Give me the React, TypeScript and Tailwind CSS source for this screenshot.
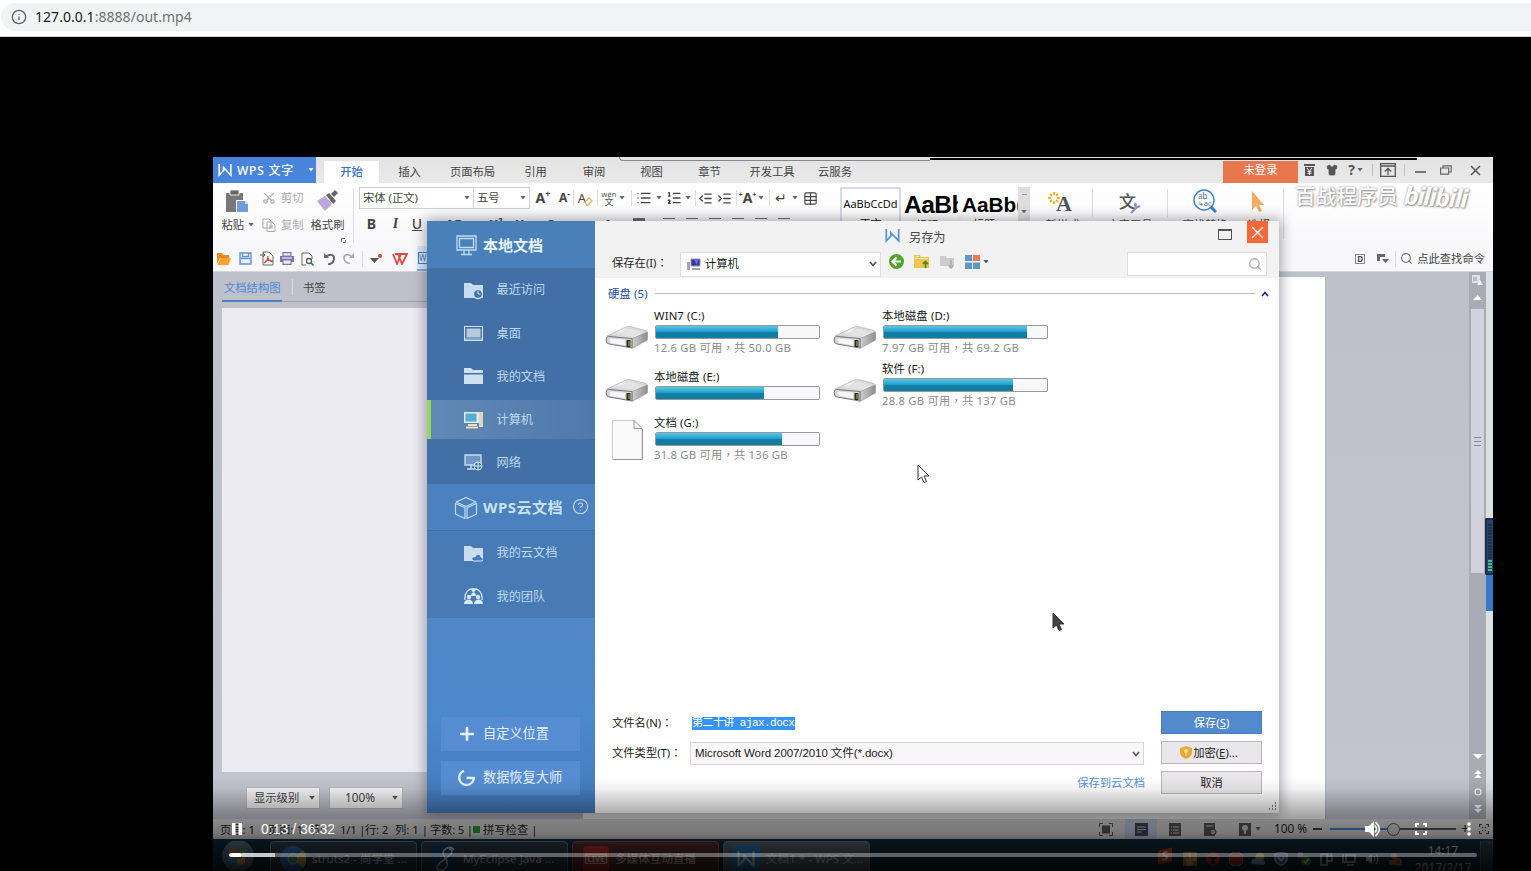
import React from "react";
import {
  Info, Scissors, List, ListOrdered,
  IndentDecrease, IndentIncrease, Table, Search, Shirt, CircleHelp, Plus,
} from "lucide-react";

const ui = "font-['Noto_Sans','Noto_Sans_CJK_SC',sans-serif]";

function Cell({ c, children }: { c: string; children?: React.ReactNode }) {
  return <div className={`flex shrink-0 items-center justify-center whitespace-nowrap ${c}`}>{children}</div>;
}

function Caret({ c = "text-[#666]" }: { c?: string }) {
  return (
    <svg width="6" height="3.5" viewBox="0 0 6 4" className={`shrink-0 ${c}`}>
      <path d="M0 0h6L3 4z" fill="currentColor" />
    </svg>
  );
}

function Chevron({ c = "text-[#555]" }: { c?: string }) {
  return (
    <svg width="8" height="6" viewBox="0 0 8 6" className={`shrink-0 ${c}`}>
      <path d="M1 1l3 3.5L7 1" fill="none" stroke="currentColor" strokeWidth="1.7" />
    </svg>
  );
}

function Punct({ children }: { children: string }) {
  return <span className="font-['Noto_Sans_CJK_TC']" lang="zh-Hant">{children}</span>;
}

function WMark({ w = 14, color = "white" }: { w?: number; color?: string }) {
  return (
    <svg width={w} height={w} viewBox="0 0 14 14" className="shrink-0">
      <path d="M1.2 1v11L5.5 7.500V4.500L12.800 12V1M1.200 12L5.500 7.500" fill="none" stroke={color} strokeWidth="1.600" />
    </svg>
  );
}

function AddressBar() {
  return (
    <div className="flex h-[37px] items-start border-b border-[#d5d7da] bg-white pt-[3px]">
      <div className="ml-px flex h-7 flex-1 items-center rounded-l-full bg-[#f1f3f4] pl-[10px]">
        <Info size={16} strokeWidth={2} className="text-[#5f6368]" />
        <span className="ml-2 font-['Noto_Sans'] text-[14px] leading-none tracking-[0.040px] text-[#202124]">
          127.0.0.1<span className="text-[#6f7377]">:8888/out.mp4</span>
        </span>
      </div>
    </div>
  );
}

function TitleTabs() {
  return (
    <div className="flex h-[26px] bg-gradient-to-b from-[#e4e3e3] to-[#e9e9ea] text-[11.3px] leading-none text-[#444]">
      <div className="flex w-[103px] items-center bg-[#4785dc] pl-[5px] text-white">
        <WMark />
        <span className="ml-[5px] w-[71px] pt-px text-[12px] font-medium tracking-[0.800px]">WPS 文字</span>
        <Caret c="text-white" />
      </div>
      <div className="ml-2 flex w-[55px] items-end">
        <div className="flex h-[22px] w-full items-center justify-center bg-white font-medium text-[#3475c8]">开始</div>
      </div>
      <div className="flex pt-[4px]">
        <Cell c="w-[61px]">插入</Cell>
        <Cell c="w-[65px]">页面布局</Cell>
        <Cell c="w-[61px]">引用</Cell>
        <Cell c="w-[56px]">审阅</Cell>
        <Cell c="w-[59px]">视图</Cell>
        <Cell c="w-[57px]">章节</Cell>
        <Cell c="w-[68px]">开发工具</Cell>
        <Cell c="w-[58px]">云服务</Cell>
      </div>
      <div className="flex flex-1 items-end justify-end text-[#555]">
        <div className="flex h-[22px] w-[75px] items-center justify-center bg-[#e9774e] pb-1 text-white">未登录</div>
        <div className="flex h-[26px] w-[195px] items-center">
          <Cell c="w-[23px]">
            <svg width="11" height="12" viewBox="0 0 11 12"><path d="M0 0h11v2H0zM1 3h9v9H1z" fill="#555" /><path d="M3 4l2.5 3L8 4M5.5 7v4M3.5 7.5h4M3.5 9.3h4" stroke="#eee" fill="none" /></svg>
          </Cell>
          <Cell c="w-[21px]"><Shirt size={12} fill="#555" strokeWidth={1.5} /></Cell>
          <Cell c="w-[27px] gap-[2px] text-[14px] font-bold">?<Caret /></Cell>
          <div className="mx-[3px] h-3 w-px bg-[#bbb]" />
          <Cell c="w-[24px]">
            <svg width="16" height="14" viewBox="0 0 16 14"><path d="M.7.7h14.6v12.6H.7zM1 3h14M8 12V5.5M4.8 8.5L8 5.3l3.2 3.2" fill="none" stroke="#555" strokeWidth="1.3" /></svg>
          </Cell>
          <div className="mx-[4px] h-3 w-px bg-[#c5c5c5]" />
          <Cell c="w-[23px]"><span className="mt-[4px] h-[2px] w-[11px] bg-[#777]" /></Cell>
          <Cell c="w-[28px]">
            <svg width="12" height="10" viewBox="0 0 12 10"><path d="M.6 3h8v6.2h-8zM3 3V.8h8.2V7H8.6" fill="none" stroke="#666" strokeWidth="1.2" /></svg>
          </Cell>
          <Cell c="w-[30px]">
            <svg width="11" height="11" viewBox="0 0 11 11"><path d="M1 1l9 9M10 1l-9 9" stroke="#555" strokeWidth="1.5" /></svg>
          </Cell>
        </div>
      </div>
    </div>
  );
}

function Sep({ c = "" }: { c?: string }) {
  return <div className={`h-4 w-px shrink-0 bg-[#dcdce0] ${c}`} />;
}

function Ribbon() {
  return (
    <div className="flex h-[63px] bg-gradient-to-b from-white to-[#f8f8fa] text-[11.3px] leading-none text-[#444]">
      <div className="flex w-[48px] flex-col items-center pt-[7px]">
        <svg width="24" height="24" viewBox="0 0 24 24">
          <path d="M1 3h17v7h-7v12H1z" fill="#77777b" /><path d="M5 0h9v5H5z" fill="#666" stroke="#fff" strokeWidth=".8" />
          <path d="M12 11h8l3 3v8H12z" fill="#719de0" /><path d="M20 11v3h3z" fill="#c9dcf7" />
        </svg>
        <div className="mt-[5px] flex w-full items-center justify-end gap-[4px] pr-[7px]">粘贴<Caret /></div>
      </div>
      <div className="flex w-[45px] flex-col text-[#aaa]">
        <div className="flex h-[30px] items-center gap-[5px] pl-px"><Scissors size={14} strokeWidth={2} className="-rotate-90" />剪切</div>
        <div className="flex h-6 items-center gap-[5px] pl-px">
          <svg width="14" height="14" viewBox="0 0 14 14"><path d="M1 1h6l2 2v7H1zM5 4h5l3 3v6.500H5z" fill="#fff" stroke="#aaa" /><path d="M7 8h4M7 10h4" stroke="#aaa" /></svg>
          复制
        </div>
      </div>
      <div className="flex w-[43px] flex-col items-center pt-[6px]">
        <svg width="24" height="23" viewBox="0 0 24 23">
          <path d="M1 12l8-5 7 8-7 7z" fill="#bba6de" /><path d="M10 6l3-2 7 8-3 3z" fill="#666" /><path d="M15 5l4-4 3 3-4 4z" fill="#666" />
        </svg>
        <span className="mt-[7px]">格式刷</span>
        <svg width="5" height="5" viewBox="0 0 5 5" className="ml-[31px] mt-[8px]"><path d="M.5 4V.5H4M2 4.5h2.5V2" fill="none" stroke="#666" /></svg>
      </div>
      <Sep c="ml-[4px] mt-[5px] h-[55px]" />
      <div className="flex w-[480px] flex-col pl-[5px] pt-1">
        <div className="flex h-[22px] items-center">
          <div className="flex h-[22px] w-[115px] items-center justify-between border border-[#cfcfd3] bg-white px-[3px]"><span>宋体 (正文)</span><Caret /></div>
          <div className="-ml-px flex h-[22px] w-[57px] items-center justify-between border border-[#cfcfd3] bg-white px-[3px]"><span>五号</span><Caret /></div>
          <Cell c="w-[26px] text-[14px] font-bold">A<span className="-mt-[9px] text-[9px]">+</span></Cell>
          <Cell c="w-[17px] text-[12px] font-bold">A<span className="-mt-[9px] text-[9px]">-</span></Cell>
          <Sep />
          <Cell c="w-[23px] text-[13px]">A<svg width="9" height="9" viewBox="0 0 9 9" className="-ml-[2px] mt-[6px]"><path d="M1 5l4-4 3 3-4 4H3z" fill="#fff" stroke="#e5ae64" strokeWidth="1.300" /></svg></Cell>
          <Sep />
          <Cell c="w-[21px]">
            <svg width="16" height="18" viewBox="0 0 16 18" overflow="visible"><text x="8" y="7.500" textAnchor="middle" fontSize="7.500" fill="#555">wén</text><text x="8" y="16" textAnchor="middle" fontSize="9" fill="#555">文</text></svg>
          </Cell>
          <Caret /><Sep c="ml-[6px]" />
          <Cell c="w-[24px]"><List size={16} strokeWidth={2} /></Cell><Caret />
          <Cell c="w-[23px]"><ListOrdered size={16} strokeWidth={2} /></Cell><Caret />
          <Sep c="ml-[4px]" />
          <Cell c="w-[19px]"><IndentDecrease size={15} strokeWidth={2.200} /></Cell>
          <Cell c="w-[19px]"><IndentIncrease size={15} strokeWidth={2.200} /></Cell>
          <Sep c="ml-[2px]" />
          <Cell c="w-[21px] text-[14px] font-bold"><span className="-mt-2 text-[7px]">+</span>A<span className="-mt-2 text-[7px]">+</span></Cell><Caret />
          <Sep c="ml-[5px]" />
          <Cell c="w-[22px] text-[14px]">↵</Cell><Caret />
          <Cell c="w-[25px]"><Table size={15} strokeWidth={1.800} /></Cell>
        </div>
        <div className="flex h-[30px] items-center text-[13px] font-bold">
          <Cell c="w-[25px] text-[14px]">B</Cell>
          <Cell c="w-[23px] font-serif text-[14px] italic">I</Cell>
          <Cell c="w-[20px] text-[14px] font-medium underline">U</Cell>
          <Cell c="w-[54px] line-through">AB</Cell>
          <Cell c="w-[30px]">X²</Cell>
          <Cell c="w-[22px]">X₂</Cell>
          <Cell c="w-[36px] font-normal">O</Cell>
          <Cell c="w-[26px] text-[11px]">abc</Cell>
          <Cell c="w-[26px]">A</Cell>
          <Cell c="w-[36px]"><span className="h-3 w-3 bg-[#666]" /></Cell>
          {[0, 1, 2, 3, 4, 5].map((i) => (
            <Cell key={i} c="w-[23px]"><span className="h-3 w-3 border-t border-[#666]" /></Cell>
          ))}
        </div>
      </div>
      <div className="ml-[6px] flex w-[193px] pt-1">
        <div className="flex h-[44px] w-[61px] flex-col items-center overflow-hidden border-2 border-[#d3dcea] bg-white pt-[9px] font-['Open_Sans','Noto_Sans_CJK_SC'] text-[11px] text-black">
          <span className="tracking-[0.050px]">AaBbCcDd</span><span className="mt-[9px]">正文</span>
        </div>
        <div className="flex h-[44px] w-[57px] flex-col overflow-hidden bg-white pl-[3px] pt-[6px] font-['Liberation_Sans','Noto_Sans_CJK_SC'] text-black">
          <span className="text-[24.500px] font-bold tracking-[-0.500px]">AaBb</span><span className="ml-[12px] mt-[3px] text-[11px]">标题 1</span>
        </div>
        <div className="ml-[3px] flex h-[44px] w-[57px] flex-col overflow-hidden bg-white pl-px pt-[6px] font-['Liberation_Sans','Noto_Sans_CJK_SC'] text-black">
          <span className="text-[20.800px] font-bold leading-[24px]">AaBb(</span><span className="ml-[11px] mt-[3px] text-[11px]">标题 2</span>
        </div>
        <div className="flex h-[44px] w-[12px] flex-col items-center justify-between bg-[#dedee0] py-[7px] pb-[18px]"><span className="h-px w-[5px] bg-[#999]" /><Caret /></div>
      </div>
      <div className="flex pt-[6px]">
        <div className="flex w-[59px] flex-col items-center pt-px">
          <div className="flex h-[24px] items-center pr-[5px]">
            <svg width="12" height="14" viewBox="0 0 12 14" className="-mt-[6px]"><path d="M6 0v3M6 9v3M0 6h3M9 6h3M2 2l2 2M8 8l2 2M10 2L8 4M4 8l-2 2" stroke="#f1af22" strokeWidth="1.8" /></svg>
            <span className="-ml-[4px] mt-1 font-['Liberation_Serif'] text-[22px] font-bold text-[#555]">A</span>
          </div>
          <span className="mt-[5px]">新样式</span>
        </div>
        <Sep c="h-[28px]" />
        <div className="flex w-[74px] flex-col items-center">
          <div className="flex h-[25px] items-center">
            <span className="text-[17px] font-medium text-[#555]">文</span>
            <svg width="11" height="12" viewBox="0 0 11 12" className="-ml-[6px] mt-[12px]"><path d="M1 11l6-6M6 1c-2 3 0 5 4 3" fill="none" stroke="#9793bd" strokeWidth="2.4" /></svg>
          </div>
          <span className="mt-[5px]">文字工具</span>
        </div>
        <Sep c="h-[28px]" />
        <div className="flex w-[74px] flex-col items-center">
          <svg width="24" height="25" viewBox="0 0 24 25">
            <circle cx="11" cy="11" r="10" fill="#fff" stroke="#3b81cb" strokeWidth="1.4" /><path d="M18 18l5 5" stroke="#3478cf" strokeWidth="3" />
            <text x="5" y="10" fontSize="8" fill="#4d6d91">ab</text><text x="5" y="17" fontSize="7" fill="#4d6d91">↳ac</text>
          </svg>
          <span className="mt-[5px]">查找替换</span>
        </div>
        <div className="flex w-[34px] flex-col items-center">
          <svg width="14" height="24" viewBox="0 0 14 24" className="mr-[2px]"><path d="M1 2v19l4-4 3 6 3-1-3-6h5z" fill="#f2ab67" /></svg>
          <span className="mt-[6px]">选择</span>
        </div>
        <Sep c="ml-[7px] h-[50px]" />
      </div>
    </div>
  );
}

function QuickBar() {
  return (
    <div className="flex h-[26px] items-center border-b border-[#d5d5da] bg-[#f8f8fa] text-[11.3px] leading-none text-[#444]">
      <Cell c="w-[22px]"><svg width="14" height="12" viewBox="0 0 14 12"><path d="M0 0h5l1.500 2H12v3H3L0 11z" fill="#e48a24" /><path d="M3.500 5H14l-2.500 7H.5z" fill="#ffa12e" /></svg></Cell>
      <Cell c="w-[21px]"><svg width="13" height="13" viewBox="0 0 13 13"><path d="M1 1h11v11H1zM1 6.500h11M3.500 1v3.500h6V1" fill="#eef4fd" stroke="#6393d7" strokeWidth="1.400" /></svg></Cell>
      <Cell c="w-[21px]">
        <svg width="14" height="15" viewBox="0 0 14 15"><path d="M3 1h6l4 4v9H3z" fill="#fff" stroke="#666" /><path d="M0 4h5M3 2l2 2-2 2" stroke="#57783b" fill="none" /><path d="M8 5c0 4-2 6-4 7M8 7c1 3 3 4 5 3M5 11c2-2 5-2 7-1" fill="none" stroke="#db3d3d" strokeWidth="1.2" /></svg>
      </Cell>
      <Cell c="w-[20px]"><svg width="14" height="13" viewBox="0 0 14 13"><path d="M0 4h14v6H0z" fill="#7d76ae" /><path d="M3 .6h8V4H3zM3 8h8v4.400H3z" fill="#eee" stroke="#7d76ae" strokeWidth="1.200" /><path d="M2 6h10" stroke="#fff" /></svg></Cell>
      <Cell c="w-[21px]"><svg width="13" height="14" viewBox="0 0 13 14"><path d="M5 13H1V1h7l3 3v3" fill="#fff" stroke="#666" /><circle cx="8" cy="9" r="2.500" fill="#fff" stroke="#555" strokeWidth="1.300" /><path d="M10 11l2.500 2.500" stroke="#2f7d52" strokeWidth="1.600" /></svg></Cell>
      <Cell c="w-[21px]"><svg width="12" height="13" viewBox="0 0 12 13"><path d="M1 1v5h5" fill="#666" /><path d="M3 5c4-4 8-2 8 1 0 4-3 6-6 6.500" fill="none" stroke="#666" strokeWidth="2" /></svg></Cell>
      <Cell c="w-[20px]"><svg width="12" height="13" viewBox="0 0 12 13"><path d="M11 1v5H6" fill="#aaa" /><path d="M9 5C5 1 1 3 1 6c0 3 3 5 6 5.500" fill="none" stroke="#aaa" strokeWidth="1.600" /></svg></Cell>
      <Sep c="ml-[3px]" />
      <Cell c="w-[26px]"><svg width="12" height="9" viewBox="0 0 12 9"><path d="M0 4h9L4.5 9z" fill="#555" /><circle cx="10" cy="2" r="2" fill="#e83a2d" /></svg></Cell>
      <Cell c="w-[22px]">
        <svg width="16" height="12" viewBox="0 0 16 12"><path d="M1 1l4 10 4-10M6 1l4 10 5-10H3" fill="none" stroke="#dd4b42" strokeWidth="1.8" /></svg>
      </Cell>
      <div className="ml-[6px] flex h-full w-[15px] items-center border-b-2 border-[#79a9e4] bg-[#dce8f8] pl-px">
        <span className="flex h-3 w-[10px] items-center border border-[#3f79c8] text-[8px] text-[#3f79c8]">W</span>
      </div>
      <div className="flex flex-1 items-center justify-end pr-[8px]">
        <Cell c="w-[22px]"><span className="border border-[#888] px-px text-[8px] font-bold leading-[8px]">D</span></Cell>
        <Cell c="w-[24px]"><svg width="12" height="10" viewBox="0 0 12 10"><path d="M0 0h8v3H3v4H0zM5 5h7L8.500 9z" fill="#666" /></svg></Cell>
        <Sep c="mr-[4px]" />
        <Search size={13} strokeWidth={2.200} className="mr-1 text-[#777]" />
        <span>点此查找命令</span>
      </div>
    </div>
  );
}

function DocumentArea() {
  return (
    <div className="flex h-[547px] bg-gradient-to-b from-[#bec1ca] to-[#c4c4ce]">
      <div className="flex w-[370px] flex-col pl-[9px] text-[11.3px] leading-none">
        <div className="flex h-[30px] items-center border-b border-[#9fa2ac]">
          <div className="-mb-px flex h-[30px] w-[60px] items-center border-b-2 border-[#4a80c4] pl-[2px] pt-[3px] text-[#4e88d8]">文档结构图</div>
          <Sep c="ml-[10px] bg-[#a4a6b0]" />
          <span className="ml-[10px] mt-[2px] text-[#444]">书签</span>
        </div>
        <div className="mt-[6px] h-[464px] bg-[#ecebf2]" />
        <div className="flex gap-[9px] pl-[24px] pt-[15px] text-[#444]">
          <div className="flex h-[22px] w-[74px] items-center justify-between border border-[#bbb] bg-[#f5f5f8] px-[7px] pr-[4px]">显示级别<Caret c="scale-110 text-[#555]" /></div>
          <div className="flex h-[22px] w-[74px] items-center justify-between border border-[#bbb] bg-[#f5f5f8] pl-[15px] pr-[4px] text-[11.800px]">100%<Caret c="scale-110 text-[#555]" /></div>
        </div>
      </div>
      <div className="mt-[5px] w-[743px] border-r border-[#b4b6c2] bg-white" />
      <div className="flex flex-1 justify-end">
        <div className="flex w-[17px] flex-col items-center bg-[#a9abb5]">
          <svg width="11" height="10" viewBox="0 0 11 10" className="mt-[3px] shrink-0"><path d="M0 0h8v8H0z" fill="#dfe0e6" /><path d="M5 10l3-5 3 5z" fill="#f4f4f4" /><path d="M2 2v4M4 2v4" stroke="#999" /></svg>
          <svg width="9" height="5" viewBox="0 0 9 5" className="mt-[10px] shrink-0"><path d="M0 5h9L4.500 0z" fill="#fff" /></svg>
          <div className="mt-[9px] flex h-[264px] w-[13px] shrink-0 flex-col items-center justify-center gap-[3px] bg-[#d1d2db]">
            <span className="h-px w-[7px] bg-[#888b98]" /><span className="h-px w-[7px] bg-[#888b98]" /><span className="h-px w-[7px] bg-[#888b98]" />
          </div>
          <svg width="10" height="62" viewBox="0 0 10 62" className="mt-[181px] shrink-0">
            <path d="M0 0h10L5 5zM1 20l4-4 4 4zM1 24l4-4 4 4zM1 51h8l-4 4zM1 55h8l-4 4z" fill="#fff" />
            <circle cx="5" cy="38" r="3" fill="none" stroke="#fff" strokeWidth="1.200" />
          </svg>
        </div>
        <div className="flex w-[7px] flex-col bg-[#dedfe1] pt-[246px]">
          <div className="-ml-px flex h-[57px] flex-col items-center gap-px rounded-l-[2px] border-2 border-r-0 border-[#1d2d4e] bg-[#2a4267] pt-[4px]">
            {Array.from({ length: 16 }, (_, i) => (
              <span key={i} className={i < 12 ? "h-[2px] w-1 bg-[#1e304d]" : "h-[2px] w-1 bg-[#48bf91]"} />
            ))}
          </div>
          <div className="h-[36px] bg-[#3578cd]" />
        </div>
      </div>
    </div>
  );
}

function StatusBar() {
  return (
    <div className="flex h-[20px] items-center whitespace-nowrap bg-[#dcdadb] text-[11.3px] leading-none text-[#222]">
      <div className="flex w-[330px] items-center pl-[7px] pt-px">
        <span className="w-[48px]">页号: 1</span><span className="w-[72px]">页面: 1&nbsp; 节:</span>
        <span className="w-[25px] tracking-[-0.200px]">1/1 |</span><span className="w-[30px] tracking-[-0.200px]">行: 2</span><span className="w-[35px]">列: 1 |</span>
        <span className="w-[43px] tracking-[-0.200px]">字数: 5 |</span><span className="mr-[3px] h-[7px] w-[7px] bg-[#2e9b2e]" /><span>拼写检查 |</span>
      </div>
      <div className="flex flex-1 items-center justify-end pr-[3px]">
        <Cell c="w-[30px]"><svg width="14" height="13" viewBox="0 0 14 13"><path d="M3 2.500h8v8H3z" fill="#555" /><path d="M.5 4V.5H4M10 .5h3.500V4M13.500 9v3.500H10M4 12.500H.5V9" fill="none" stroke="#555" /></svg></Cell>
        <Cell c="h-[20px] w-[32px] bg-[#c0cce0] ml-[4px] mr-[8px]"><svg width="13" height="13" viewBox="0 0 13 13"><path d="M0 0h13v13H0z" fill="#3f4654" /><path d="M2 4h9M2 6.500h9M2 9h5" stroke="#bbb" /></svg></Cell>
        <Cell c="w-[20px]"><svg width="12" height="13" viewBox="0 0 12 13"><path d="M0 0h12v13H0z" fill="#555" /><path d="M2 4h1M4 4h6M2 7h1M4 7h6M2 10h1M4 10h6" stroke="#ccc" /></svg></Cell>
        <Cell c="w-[50px]"><svg width="13" height="13" viewBox="0 0 13 13"><path d="M0 0h11v13H0z" fill="#555" /><path d="M2 3h7" stroke="#ccc" /><circle cx="9" cy="9" r="3" fill="#aaa" stroke="#444" /></svg></Cell>
        <Cell c="w-[20px]"><svg width="12" height="13" viewBox="0 0 12 13"><path d="M0 0h12v13H0z" fill="#555" /><circle cx="6" cy="5" r="3" fill="#ccc" /><path d="M5 8h2v3H5z" fill="#ccc" /></svg></Cell>
        <Caret />
        <span className="ml-[13px] w-[38px] text-[11.800px]">100 %</span>
        <span className="ml-px mr-[8px] h-[1.5px] w-[9px] bg-[#444]" />
        <span className="h-[2px] w-[57px] bg-[#4286dc]" />
        <span className="h-[13px] w-[13px] rounded-full border border-[#555] bg-[#d5d5d5]" />
        <span className="h-[1.5px] w-[56px] bg-[#555]" />
        <span className="ml-[5px] w-[10px] text-[14px]">+</span>
        <svg width="10" height="10" viewBox="0 0 10 10" className="ml-[8px] mr-px"><path d="M.5 3V.5H3M7 .5h2.500V3M9.500 7v2.500H7M3 9.500H.5V7M3 3l1 1M7 3L6 4M3 7l1-1M7 7L6 6" fill="none" stroke="#444" strokeWidth="1.200" /></svg>
      </div>
    </div>
  );
}

function TaskButton({ c, label, children }: { c: string; label: string; children: React.ReactNode }) {
  return (
    <div className={`mr-[4px] flex h-[40px] w-[147px] items-center overflow-hidden rounded-sm border border-[#789] pb-[5px] ${c}`}>
      {children}
      <span className="ml-[6px] whitespace-nowrap text-[11.600px] text-[#e6edf3]">{label}</span>
    </div>
  );
}

function Taskbar() {
  return (
    <div className="flex h-[38px] bg-[#123246] pt-[2px] text-[11.3px] leading-none">
      <Cell c="h-[32px] w-[57px] pr-[8px]">
        <svg width="34" height="32" viewBox="0 0 34 32"><circle cx="17" cy="15" r="16" fill="#638093" /><path d="M8 9c3-2 5-2 8 0v6c-3-2-5-2-8 0z" fill="#df704c" /><path d="M17 9c3 1 5 1 8-1v6c-3 2-5 2-8 1z" fill="#70ab56" /><path d="M7 17c3-2 5-2 8 0v6c-3-2-5-2-8 0z" fill="#599bd1" /><path d="M16 17c3 1 5 1 8-1v6c-3 2-5 2-8 1z" fill="#edc54b" /></svg>
      </Cell>
      <TaskButton c="bg-[#36495a] pl-[9px]" label="struts2 - 尚学堂 ...">
        <svg width="26" height="26" viewBox="0 0 26 26" className="shrink-0"><circle cx="13" cy="13" r="13" fill="#3d80df" /><path d="M13 13L23 4a13 13 0 010 18z" fill="#e9be45" /><circle cx="13" cy="13" r="5" fill="#4fa475" stroke="#ddd" /></svg>
      </TaskButton>
      <TaskButton c="bg-[#36495a] pl-[9px]" label="MyEclipse Java ...">
        <svg width="26" height="28" viewBox="0 0 26 28" className="shrink-0"><path d="M0 0h26v28H0z" fill="#154a84" /><path d="M23 5C20 0 13 3 12 8c0 5 6 6 4 13-2 5-10 6-10 1 0-4 8-7 12-11 4-3 4-7 0-7" fill="none" stroke="#fff" strokeWidth="1.500" /></svg>
      </TaskButton>
      <TaskButton c="bg-[#683538] border-[#bd4848] pl-[10px]" label="多媒体互动直播">
        <span className="flex h-[26px] w-[26px] items-center justify-center rounded bg-[#e43e30] text-[8px] font-bold text-white"><span className="border border-white px-px">LIVE</span></span>
      </TaskButton>
      <TaskButton c="bg-[#667783] pl-[8px]" label="文档1 * - WPS 文...">
        <span className="flex h-[28px] w-[28px] shrink-0 items-center justify-center rounded bg-[#3092de]"><WMark w={18} /></span>
      </TaskButton>
      <div className="flex flex-1 justify-end">
        <div className="flex h-[36px] items-center text-white">
          <Cell c="w-[28px] pb-[6px]"><span className="flex h-[14px] w-[14px] -skew-y-12 items-center justify-center bg-[#e04a24] text-[12px] font-bold">S</span></Cell>
          <Cell c="w-[22.7px]"><svg width="14" height="14" viewBox="0 0 14 14"><path d="M0 0h14v14H0z" fill="#df842a" /><path d="M7 1c-3 3 2 3 0 6M3 8h7M4 10h5M3 12h8M10 7h2v2" fill="none" stroke="#fff" strokeWidth="1.200" /></svg></Cell>
          <Cell c="w-[22.7px]"><svg width="14" height="14" viewBox="0 0 14 14"><circle cx="7" cy="7" r="7" fill="#d13225" /><path d="M2 5h10L7 8z" fill="#222" /><circle cx="7" cy="10" r="2.500" fill="#222" /></svg></Cell>
          <Cell c="w-[22.7px]"><svg width="14" height="14" viewBox="0 0 14 14"><path d="M4 0h6l4 4v6l-4 4H4l-4-4V4z" fill="#c8372f" stroke="#ccc" strokeWidth=".8" /></svg></Cell>
          <Cell c="w-[22.7px]"><svg width="15" height="14" viewBox="0 0 15 14"><circle cx="9" cy="5" r="4.500" fill="#eab83c" /><path d="M1 12c-2-4 2-6 4-5 2-3 6-1 6 1 4 0 4 5 1 5z" fill="#8fbbe3" /></svg></Cell>
          <Cell c="w-[22.7px]"><svg width="14" height="14" viewBox="0 0 14 14"><path d="M1 2q6-3 12 0c1 6-2 10-6 11.500C3 12 0 8 1 2z" fill="#4d7ec0" stroke="#ccd6e6" strokeWidth="1.500" /><path d="M4 5l3 4 3-4" fill="none" stroke="#fff" strokeWidth="1.500" /></svg></Cell>
          <Cell c="w-[22.7px]"><svg width="14" height="14" viewBox="0 0 14 14"><path d="M1 0h5v6H1z" fill="#889" /><circle cx="9" cy="9" r="5" fill="#439a38" /><path d="M6.500 9l2 2 3-4" fill="none" stroke="#fff" strokeWidth="1.500" /></svg></Cell>
          <Cell c="w-[22.7px]"><svg width="13" height="14" viewBox="0 0 13 14"><path d="M1 2h6v11H1zM8 1v3M11 1v3M7 4h5v5H7z" fill="none" stroke="#ddd" strokeWidth="1.500" /></svg></Cell>
          <Cell c="w-[22.7px]"><svg width="14" height="13" viewBox="0 0 14 13"><path d="M4 2h9v7H4zM5 12h7M1 1v8h3" fill="none" stroke="#ddd" strokeWidth="1.500" /></svg></Cell>
          <Cell c="w-[22.7px]"><svg width="14" height="12" viewBox="0 0 14 12"><path d="M1 4h2l4-3v10L3 8H1z" fill="#ddd" /><path d="M9 3q2 3 0 6M11.500 1q3 5 0 10" fill="none" stroke="#ddd" /></svg></Cell>
          <Cell c="w-[22.7px]"><svg width="14" height="14" viewBox="0 0 14 14"><circle cx="6" cy="4" r="3" fill="#d98240" /><path d="M1 8h9v5H1z" fill="#cf6530" /><circle cx="10" cy="10" r="3.300" fill="#b8452c" stroke="#e0a080" /></svg></Cell>
        </div>
        <div className="flex w-[74px] flex-col items-center gap-[5px] pt-[4px] text-[11.900px] text-[#eee]"><span>14:17</span><span>2017/2/17</span></div>
        <div className="w-[13px] border-l border-[#567] bg-[#2f4655]" />
      </div>
    </div>
  );
}

const folder = "M0 2h7l2 2h10v13H0z";
const navIcons: Record<string, React.ReactNode> = {
  recent: <><path d={folder} fill="#c7dcef" /><circle cx="14" cy="13" r="4.500" fill="#4372a7" stroke="#c7dcef" strokeWidth="1.300" /><path d="M14 10v3h2.500" fill="none" stroke="#d8e8f5" /></>,
  desktop: <><path d="M.5 2.500h18v14H.5z" fill="none" stroke="#d0e3f2" strokeWidth="1.200" /><path d="M2.500 4.500h14v9h-14z" fill="#b8cadf" /><path d="M1 15h17" stroke="#d0e3f2" /></>,
  docs: <path d="M0 1h7l2 2h10v3H0zM0 7.500h19V17H0z" fill="#cfe0f1" />,
  pc: <><path d="M0 2h16v11H0z" fill="#dfe9ec" /><path d="M1.500 3.500h11v8h-11z" fill="#55aed2" /><path d="M15 2h4v15h-4z" fill="#dfd6bd" /><path d="M4 15h9M2 17.500h12" stroke="#e9d9b9" strokeWidth="2" /></>,
  net: <><path d="M1 2h16v10H1z" fill="#6f99c3" stroke="#c8dced" strokeWidth="1.400" /><path d="M3 16h8M7 12v4" stroke="#c8dced" strokeWidth="1.500" /><circle cx="14" cy="13" r="4" fill="#4777ad" stroke="#d9e8f4" /><path d="M10 13h8M14 9v8" stroke="#d9e8f4" /></>,
  cloud: <><path d={folder} fill="#cadded" /><path d="M9 17c-3-3 0-5 2-4 1-4 6-3 6 0 3 1 2 4 1 4z" fill="#4b7eb8" stroke="#d7e6f4" /></>,
  team: <><path d="M1 13C0 4 6 2 8 2M18 13C19 4 13 2 11 2" fill="none" stroke="#d5e6f3" strokeWidth="1.300" /><g fill="#d9e8f4"><circle cx="9.500" cy="3" r="2" /><path d="M7 9c0-5 5-5 5 0z" /><circle cx="5" cy="10" r="2.200" /><path d="M0 17c0-6 9-6 9 0z" /><circle cx="14" cy="10" r="2.200" /><path d="M10 17c0-6 9-6 9 0z" /></g></>,
};

function NavItem({ icon, label, active }: { icon: string; label: string; active?: boolean }) {
  return (
    <div className={`flex h-[43.2px] items-center ${active ? "py-[2px]" : ""}`}>
      <div className={`flex h-full w-full items-center border-l-4 ${active ? "border-[#97d65c] bg-gradient-to-r from-[#6189b7] to-[#4f79ac] bg-clip-padding" : "border-transparent"}`}>
        <svg width="19" height="19" viewBox="0 0 19 19" className="ml-[33px]">{navIcons[icon]}</svg>
        <span className="ml-[13.5px] pt-px text-[12.2px] text-[#bcd8ef]">{label}</span>
      </div>
    </div>
  );
}

function Sidebar() {
  return (
    <div className="flex w-[168px] flex-col bg-[#4f88c9] leading-none">
      <div className="flex h-[46.500px] items-center bg-[#4a80b9] pl-[29px] pt-[3px] text-[15px] font-bold text-[#ebf4fc]">
        <svg width="21" height="21" viewBox="0 0 21 21"><path d="M1 1h19v14H1zM3.500 3.500h14v9h-14zM8 15v4M13 15v4M5 19.500h11" fill="none" stroke="#bcdcf3" strokeWidth="1.300" /></svg>
        <span className="ml-[6px]">本地文档</span>
      </div>
      <div className="border-t border-[#3e70a9] bg-[#426fa6]">
        <NavItem icon="recent" label="最近访问" /><NavItem icon="desktop" label="桌面" /><NavItem icon="docs" label="我的文档" />
        <NavItem icon="pc" label="计算机" active /><NavItem icon="net" label="网络" />
      </div>
      <div className="flex h-[46px] items-center bg-[#4a81be] pl-[27px] pt-[2px] text-[15px] font-bold text-[#cae0f3]">
        <svg width="24" height="24" viewBox="0 0 24 24"><path d="M12 1.500l10 4.500-10 4.500L2 6zM1.500 7.500l9.500 4.300V22.500L1.500 18zM22.500 7.500L13 11.800v10.700l9.500-4.500z" fill="none" stroke="#bfdcf4" strokeWidth="1.200" strokeLinejoin="round" /></svg>
        <span className="-mt-px ml-[5px] w-[82px] whitespace-nowrap tracking-[0.500px]">WPS云文档</span>
        <CircleHelp size={17} strokeWidth={1.500} className="-mt-[3px] ml-[7px]" />
      </div>
      <div className="border-t border-[#3d70ab] bg-[#487bb6]">
        <NavItem icon="cloud" label="我的云文档" /><NavItem icon="team" label="我的团队" />
      </div>
      <div className="flex flex-1 flex-col justify-end gap-[10px] bg-gradient-to-b from-[#5087c7] via-[#4c88cc] to-[#447abd] pb-[18px] pl-[14px] pr-[15px]">
        <div className="flex h-[34px] items-center bg-[#568dd2] pl-[17px] text-[13.200px] text-[#e5f0fa]"><Plus size={20} strokeWidth={3.200} className="-ml-px mr-[6px]" />自定义位置</div>
        <div className="flex h-[34px] items-center bg-[#568dd2] pl-[16px] text-[13.200px] text-[#e5f0fa]">
          <svg width="19" height="18" viewBox="0 0 19 18" className="mr-[7px]"><path d="M7 1.800A7.300 7.300 0 1 0 16.800 9H9.500" fill="none" stroke="currentColor" strokeWidth="2.400" /></svg>数据恢复大师
        </div>
      </div>
    </div>
  );
}

function DiskIcon() {
  return (
    <svg width="44" height="26" viewBox="0 0 44 26">
      <defs>
        <linearGradient id="diskTop" x1="0" y1="1" x2="1" y2="0"><stop offset="0" stopColor="#bcbcbc" /><stop offset=".5" stopColor="#f2f2f2" /><stop offset="1" stopColor="#c4c4c4" /></linearGradient>
        <linearGradient id="diskSide" x1="0" y1="0" x2="1" y2="0"><stop offset="0" stopColor="#cfcfcf" /><stop offset="1" stopColor="#8e8e8e" /></linearGradient>
      </defs>
      <path d="M2 11L20 2.500q3-1.500 6-.8L41 5.500q2 1 0 2L27 14z" fill="url(#diskTop)" stroke="#a8a8a8" strokeWidth=".6" />
      <path d="M14 10.500l10-7.500 12 3-9 6z" fill="#e4e4e4" stroke="#ccc" strokeWidth=".5" />
      <path d="M27 13.500L42.500 7v8L27 23.500z" fill="url(#diskSide)" stroke="#888" strokeWidth=".5" />
      <path d="M3.500 11.500L27 13.500v9.500L4 19q-3-.5-2.800-4Q1 11.500 3.500 11.500z" fill="#d6d6da" stroke="#777" />
      <path d="M5 13.500l15 1.300v5.500L6 18q-2-2-1-4.500z" fill="#f6f6fb" /><path d="M21.500 15h4v7h-4z" fill="#292929" /><path d="M24 16v5" stroke="#b7c83a" />
    </svg>
  );
}

function FileIcon() {
  return (
    <svg width="44" height="40" viewBox="0 0 44 40">
      <path d="M7.500.5H29l8 8v31H7.500z" fill="#fafafa" stroke="#ccc" /><path d="M29 .5v8h8z" fill="#fff" stroke="#999" /><path d="M37.500 9v30.500H8" fill="none" stroke="#999" />
    </svg>
  );
}

function Drive({ name, used, size, file }: { name: string; used: number; size?: [string, string]; file?: boolean }) {
  return (
    <div className="flex h-[53.600px] items-center">
      <div className={`w-[50px] shrink-0 ${file ? "pt-[2px]" : "pt-[12px]"}`}>{file ? <FileIcon /> : <DiskIcon />}</div>
      <div className="w-[165px] whitespace-nowrap text-[11.300px]">
        <div className="-ml-px h-[16px] leading-[14px] tracking-[0.150px] text-[#151515]">{name}</div>
        <div className="h-[14px] rounded-[2px] border border-[#999] bg-[#f8f8fa]">
          <div className="h-full bg-gradient-to-b from-[#58c7e9] from-0% via-[#26a1cd] via-45% to-[#117da3] to-55%" style={{ width: `${used}%` }} />
        </div>
        {size && <div className="-ml-px h-[16px] pt-px leading-[14px] tracking-[0.200px] text-[#8a8a8f]">{size[0]} GB 可用<Punct>，</Punct>共 {size[1]} GB</div>}
      </div>
    </div>
  );
}

function SaveDialog() {
  return (
    <div className="absolute left-[214px] top-[64px] flex h-[592px] w-[852px] bg-white text-[11.300px] leading-none text-[#222] shadow-[0_0_12px_2px_rgba(60,60,70,0.45)]">
      <Sidebar />
      <div className="flex w-[684px] flex-col">
        <div className="flex h-[57px] flex-col bg-[#f3f2f3]">
          <div className="flex h-[29px]">
            <div className="ml-[290px] flex w-[333px] items-center gap-[9px] text-[12.200px] text-[#444]"><WMark w={15} color="#5c94d2" /><span className="mt-[5px]">另存为</span></div>
            <div className="mt-[8px] h-[11px] w-[14px] border border-[#555] border-t-2" />
            <div className="ml-[15px] flex h-[22px] w-[21px] items-center justify-center bg-[#f7673c]"><svg width="13" height="13" viewBox="0 0 13 13"><path d="M1 1l11 11M12 1L1 12" stroke="#fff" strokeWidth="1.300" /></svg></div>
          </div>
          <div className="flex h-[26px] items-center pl-[17px]">
            <span className="w-[68px] whitespace-nowrap">保存在(I)<Punct>：</Punct></span>
            <div className="mt-[2px] flex h-[25px] w-[201px] items-center border border-[#ddd] bg-white px-[5px] pr-[3px]">
              <svg width="15" height="13" viewBox="0 0 15 13"><path d="M5 1h9v7H5z" fill="#3434aa" stroke="#999" /><path d="M8 2h4l-1 5z" fill="#726ce0" /><path d="M1 4h3v8H1zM6 10h8v2H6z" fill="#a3a8ad" /></svg>
              <span className="ml-[4px] flex-1">计算机</span><Chevron />
            </div>
            <Cell c="-mt-[3px] w-[31px]"><svg width="15" height="15" viewBox="0 0 15 15"><circle cx="7.500" cy="7.500" r="7.500" fill="#50a52c" /><path d="M12 7.500H4M7.500 3.500l-4 4 4 4" fill="none" stroke="#fff" strokeWidth="2.200" /></svg></Cell>
            <Cell c="-mt-[3px] w-[19px]"><svg width="15" height="14" viewBox="0 0 15 14"><path d="M0 0h6l1 2h8v11H0z" fill="#efc551" /><path d="M1 3.500h13M2 1.500h3" stroke="#fff0a0" /><path d="M11.500 13V7M9 9l2.500-2.500L14 9" fill="none" stroke="#598821" strokeWidth="1.800" /></svg></Cell>
            <Cell c="-mt-[3px] w-[33px]"><svg width="15" height="14" viewBox="0 0 15 14"><path d="M0 1h6l1 2h7v8H0z" fill="#ccc" /><path d="M11 5v8M8.500 10.500L11 13l2.500-2.500" fill="none" stroke="#aaa" strokeWidth="1.500" /></svg></Cell>
            <Cell c="-mt-[3px] w-[26px] gap-[3px]"><svg width="15" height="14" viewBox="0 0 15 14" className="shrink-0"><path d="M0 0h7v6H0zM0 7.500h7V14H0zM8 7.500h7V14H8z" fill="#5b98cb" /><path d="M8 0h7v6H8z" fill="#ee7850" /></svg><Caret c="text-[#555]" /></Cell>
            <div className="ml-[137px] mt-[2px] flex h-[24px] w-[140px] items-center justify-end border border-[#ddd] bg-white pr-[4px]"><Search size={14} strokeWidth={2.200} className="text-[#aaa]" /></div>
          </div>
        </div>
        <div className="flex h-[27px] items-center pl-[13px] pr-[10px] pb-px pt-[5px] text-[#254b9f]">
          <span className="w-[47px] tracking-[0.150px]">硬盘 (5)</span><span className="h-px w-[600px] bg-[#bcbcc2]" />
          <Chevron c="ml-[6px] rotate-180 text-[#1c238a]" />
        </div>
        <div className="flex pl-[10px]">
          <div className="flex w-[228px] flex-col">
            <Drive name="WIN7 (C:)" used={75} size={["12.6", "50.0"]} />
            <Drive name="本地磁盘 (E:)" used={66} />
            <Drive name="文档 (G:)" used={77} size={["31.8", "136"]} file />
          </div>
          <div className="flex flex-col">
            <Drive name="本地磁盘 (D:)" used={88} size={["7.97", "69.2"]} />
            <Drive name="软件 (F:)" used={79} size={["28.8", "137"]} />
          </div>
        </div>
        <div className="flex flex-1 flex-col justify-end">
          <div className="flex h-[30px] items-center pl-[17px]">
            <span className="w-[80px] whitespace-nowrap">文件名(N)<Punct>：</Punct></span>
            <span className="h-[13px] w-[103px] overflow-hidden whitespace-nowrap bg-[#3794f5] font-['Liberation_Mono','Noto_Sans_CJK_SC'] text-[11px] leading-[13px] tracking-[-0.550px] text-white">第二十讲 ajax.docx</span>
            <Cell c="-mt-px ml-[366px] h-[23px] w-[101px] border border-[#4a7dbd] bg-[#528acb] text-white">保存(<u>S</u>)</Cell>
          </div>
          <div className="flex h-[30px] items-center pl-[17px]">
            <span className="w-[78px] whitespace-nowrap">文件类型(T)<Punct>：</Punct></span>
            <div className="flex h-[23px] w-[454px] items-center justify-between border border-[#d8d5d8] bg-[#f8f6f8] px-[4px] pr-[3px] pt-px font-['Liberation_Sans','Noto_Sans_CJK_SC'] text-[11.500px] tracking-[-0.080px]"><span>Microsoft Word 2007/2010 文件(*.docx)</span><Chevron /></div>
            <Cell c="-mt-px ml-[17px] h-[23px] w-[101px] border border-[#b6b5b8] bg-[#e9e7e9]">
              <svg width="12" height="13" viewBox="0 0 12 13" className="-ml-[5px] mr-px"><path d="M0 2l6-2 6 2v4q0 5-6 7-6-2-6-7z" fill="#eea735" /><circle cx="6" cy="5" r="2" fill="#ffe3a2" /><path d="M6 6v4" stroke="#ffe3a2" /></svg>
              加密(<u>E</u>)...
            </Cell>
          </div>
          <div className="flex h-[30px] items-center justify-end pr-[17px]">
            <span className="mr-[16px] text-[#5691e8]">保存到云文档</span>
            <Cell c="-mt-px h-[23px] w-[101px] border border-[#b6b5b8] bg-[#e9e7e9]">取消</Cell>
          </div>
          <div className="flex h-[15px] items-end justify-end pb-[2px] pr-[2px]"><svg width="9" height="9" viewBox="0 0 9 9"><path d="M7 1h1M4 4h1M7 4h1M1 7h1M4 7h1M7 7h1" stroke="#888" strokeWidth="2" /></svg></div>
        </div>
      </div>
    </div>
  );
}

function PlayerControls() {
  return (
    <div className="absolute inset-x-0 top-[620px] flex h-[94px] flex-col bg-[linear-gradient(to_bottom,rgba(0,0,0,0)_0%,rgba(0,0,0,0.050)_12%,rgba(0,0,0,0.340)_40%,rgba(0,0,0,0.460)_60%,rgba(0,0,0,0.660)_74%,rgba(0,0,0,0.880)_100%)] pt-[42px]">
      <div className="flex h-[20px] items-center pl-[19px] text-white">
        <svg width="10" height="12" viewBox="0 0 10 12"><path d="M0 0h3.500v12H0zM6.500 0H10v12H6.500z" fill="white" /></svg>
        <span className="ml-[19px] w-[1093px] font-['Liberation_Sans'] text-[14px] leading-none">0:13 / 36:32</span>
        <svg width="16" height="16" viewBox="0 0 16 16" className="ml-[11px]"><path d="M0 5h4l5-5v16l-5-5H0z" fill="white" /><path d="M10 4.500q3 3.500 0 7M10.500 1q7.500 7 0 14" fill="none" stroke="white" strokeWidth="1.600" /></svg>
        <svg width="12" height="12" viewBox="0 0 12 12" className="ml-[34px]"><path d="M1 4V1h3M8 1h3v3M11 8v3H8M4 11H1V8" fill="none" stroke="white" strokeWidth="2" /></svg>
        <svg width="4" height="14" viewBox="0 0 4 14" className="ml-[40px]"><circle cx="2" cy="2" r="1.800" fill="white" /><circle cx="2" cy="7" r="1.800" fill="white" /><circle cx="2" cy="12" r="1.800" fill="white" /></svg>
      </div>
      <div className="mx-[16px] mt-[14px] flex h-[4px] overflow-hidden rounded-full bg-white/35">
        <div className="w-[13px] rounded-full bg-white" /><div className="w-[33px] bg-white/65" />
      </div>
    </div>
  );
}

function Cursor({ c, fill, stroke }: { c: string; fill: string; stroke: string }) {
  return (
    <svg width="13" height="20" viewBox="0 0 13 20" className={`absolute ${c}`}>
      <path d="M1 1v15l3.500-3 2.500 5.500 2.500-1-2.500-5.500h5z" fill={fill} stroke={stroke} />
    </svg>
  );
}

export default function App() {
  return (
    <div className={`flex h-[871px] w-[1531px] flex-col overflow-hidden bg-black ${ui}`}>
      <AddressBar />
      <div className="flex-1 overflow-hidden pl-[213px] pt-[120px]">
        <div className="relative h-[714px] w-[1280px] overflow-hidden bg-[#e6e6e6]">
          <TitleTabs />
          <Ribbon />
          <QuickBar />
          <DocumentArea />
          <StatusBar />
          <Taskbar />
          <div className="absolute left-[406px] top-0 h-[4px] w-[311px] rounded-bl border-b border-l border-[#85888f]" />
          <div className="absolute left-[717px] top-px h-[2px] w-[487px] bg-black" />
          <SaveDialog />
          <div className="absolute left-[1082px] top-[24px] flex h-[30px] items-center whitespace-nowrap font-bold leading-none text-white [text-shadow:0_0_2px_#888,1px_1px_2px_#999]">
            <span className="text-[20.600px] font-medium">百战程序员</span>
            <span className="ml-[6px] rotate-[3deg] font-['Noto_Sans'] text-[25px] italic tracking-[-1.500px]">bilibili</span>
          </div>
          <Cursor c="left-[704px] top-[307px]" fill="white" stroke="#333" />
          <Cursor c="left-[839px] top-[455px]" fill="#444" stroke="#333" />
          <PlayerControls />
        </div>
      </div>
    </div>
  );
}
